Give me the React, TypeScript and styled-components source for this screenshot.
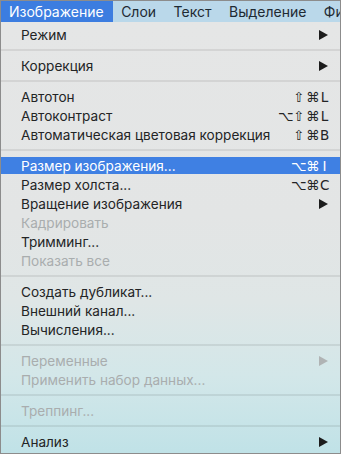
import { ReactElement } from 'react'
import styled, { createGlobalStyle } from 'styled-components'

const GlobalStyle = createGlobalStyle`
  html, body {
    margin: 0;
    padding: 0;
    background: #ffffff;
  }
  * {
    box-sizing: border-box;
  }
`

const Frame = styled.div`
  width: 341px;
  height: 454px;
  border: 1px solid #8c8c8c;
  display: flex;
  flex-direction: column;
  overflow: hidden;
  font-family: Inter, 'Noto Sans', sans-serif;
  font-size: 13.6px;
  -webkit-font-smoothing: antialiased;
`

const MenuBar = styled.div`
  height: 21px;
  flex: none;
  display: flex;
  align-items: stretch;
  background: #bad8ea;
  white-space: nowrap;
  overflow: hidden;
`

const BarItem = styled.div<{ $active?: boolean }>`
  display: flex;
  align-items: center;
  padding: 0 9.5px 0 8px;
  color: ${p => (p.$active ? '#ffffff' : '#1e2a33')};
  background: ${p => (p.$active ? '#3c7de0' : 'transparent')};
  font-size: 14px;
`

const Menu = styled.div`
  flex: 1;
  display: flex;
  flex-direction: column;
  padding-top: 3px;
  background: linear-gradient(
    180deg,
    #e5e6e6 0%,
    #e3e5e5 45%,
    #dfe6e6 65%,
    #d3e7e9 82%,
    #c0e2e7 100%
  );
`

const Row = styled.div<{ $selected?: boolean; $disabled?: boolean }>`
  height: 19px;
  flex: none;
  display: flex;
  align-items: center;
  padding: 0 11px 0 20px;
  background: ${p =>
    p.$selected
      ? 'linear-gradient(180deg, transparent 1px, #3f80e3 1px, #3f80e3 18px, transparent 18px)'
      : 'transparent'};
  color: ${p =>
    p.$selected ? '#ffffff' : p.$disabled ? '#a9adae' : '#232425'};
  white-space: nowrap;
`

const Label = styled.span`
  flex: 1;
`

const Shortcut = styled.span`
  display: flex;
  align-items: center;
  gap: 1px;
  font-family: 'DejaVu Sans', sans-serif;
  font-size: 13.5px;
`

const Key = styled.span<{ $w: number }>`
  display: inline-block;
  width: ${p => p.$w}px;
  text-align: center;
`

const Arrow = styled.span<{ $disabled?: boolean; $light?: boolean }>`
  width: 0;
  height: 0;
  margin-right: 1px;
  border-top: 5px solid transparent;
  border-bottom: 5px solid transparent;
  border-left: 9px solid
    ${p => (p.$disabled ? '#b0b3b4' : p.$light ? '#ffffff' : '#1c1c1c')};
`

const Separator = styled.div`
  height: 12px;
  flex: none;
  display: flex;
  align-items: center;
  &::after {
    content: '';
    flex: 1;
    height: 2px;
    background: rgba(0, 0, 0, 0.075);
  }
`

type Item =
  | { sep: true }
  | {
      sep?: false
      label: string
      keys?: string
      submenu?: boolean
      disabled?: boolean
      selected?: boolean
    }

const items: Item[] = [
  { label: 'Режим', submenu: true },
  { sep: true },
  { label: 'Коррекция', submenu: true },
  { sep: true },
  { label: 'Автотон', keys: '⇧⌘L' },
  { label: 'Автоконтраст', keys: '⌥⇧⌘L' },
  { label: 'Автоматическая цветовая коррекция', keys: '⇧⌘B' },
  { sep: true },
  { label: 'Размер изображения...', keys: '⌥⌘I', selected: true },
  { label: 'Размер холста...', keys: '⌥⌘C' },
  { label: 'Вращение изображения', submenu: true },
  { label: 'Кадрировать', disabled: true },
  { label: 'Тримминг...' },
  { label: 'Показать все', disabled: true },
  { sep: true },
  { label: 'Создать дубликат...' },
  { label: 'Внешний канал...' },
  { label: 'Вычисления...' },
  { sep: true },
  { label: 'Переменные', submenu: true, disabled: true },
  { label: 'Применить набор данных...', disabled: true },
  { sep: true },
  { label: 'Треппинг...', disabled: true },
  { sep: true },
  { label: 'Анализ', submenu: true },
]

const keyWidth = (k: string) => {
  switch (k) {
    case '⌥':
      return 14
    case '⇧':
      return 12
    case '⌘':
      return 13
    default:
      return 9
  }
}

const renderKeys = (keys: string) => (
  <Shortcut>
    {Array.from(keys).map((k, i) => (
      <Key key={i} $w={keyWidth(k)}>
        {k}
      </Key>
    ))}
  </Shortcut>
)

export default function App(): ReactElement {
  return (
    <>
      <GlobalStyle />
      <Frame>
        <MenuBar>
          <BarItem $active>Изображение</BarItem>
          <BarItem>Слои</BarItem>
          <BarItem>Текст</BarItem>
          <BarItem>Выделение</BarItem>
          <BarItem>Фи</BarItem>
        </MenuBar>
        <Menu>
          {items.map((item, i) =>
            item.sep ? (
              <Separator key={i} />
            ) : (
              <Row key={i} $selected={item.selected} $disabled={item.disabled}>
                <Label>{item.label}</Label>
                {item.keys && renderKeys(item.keys)}
                {item.submenu && (
                  <Arrow $disabled={item.disabled} $light={item.selected} />
                )}
              </Row>
            ),
          )}
        </Menu>
      </Frame>
    </>
  )
}
